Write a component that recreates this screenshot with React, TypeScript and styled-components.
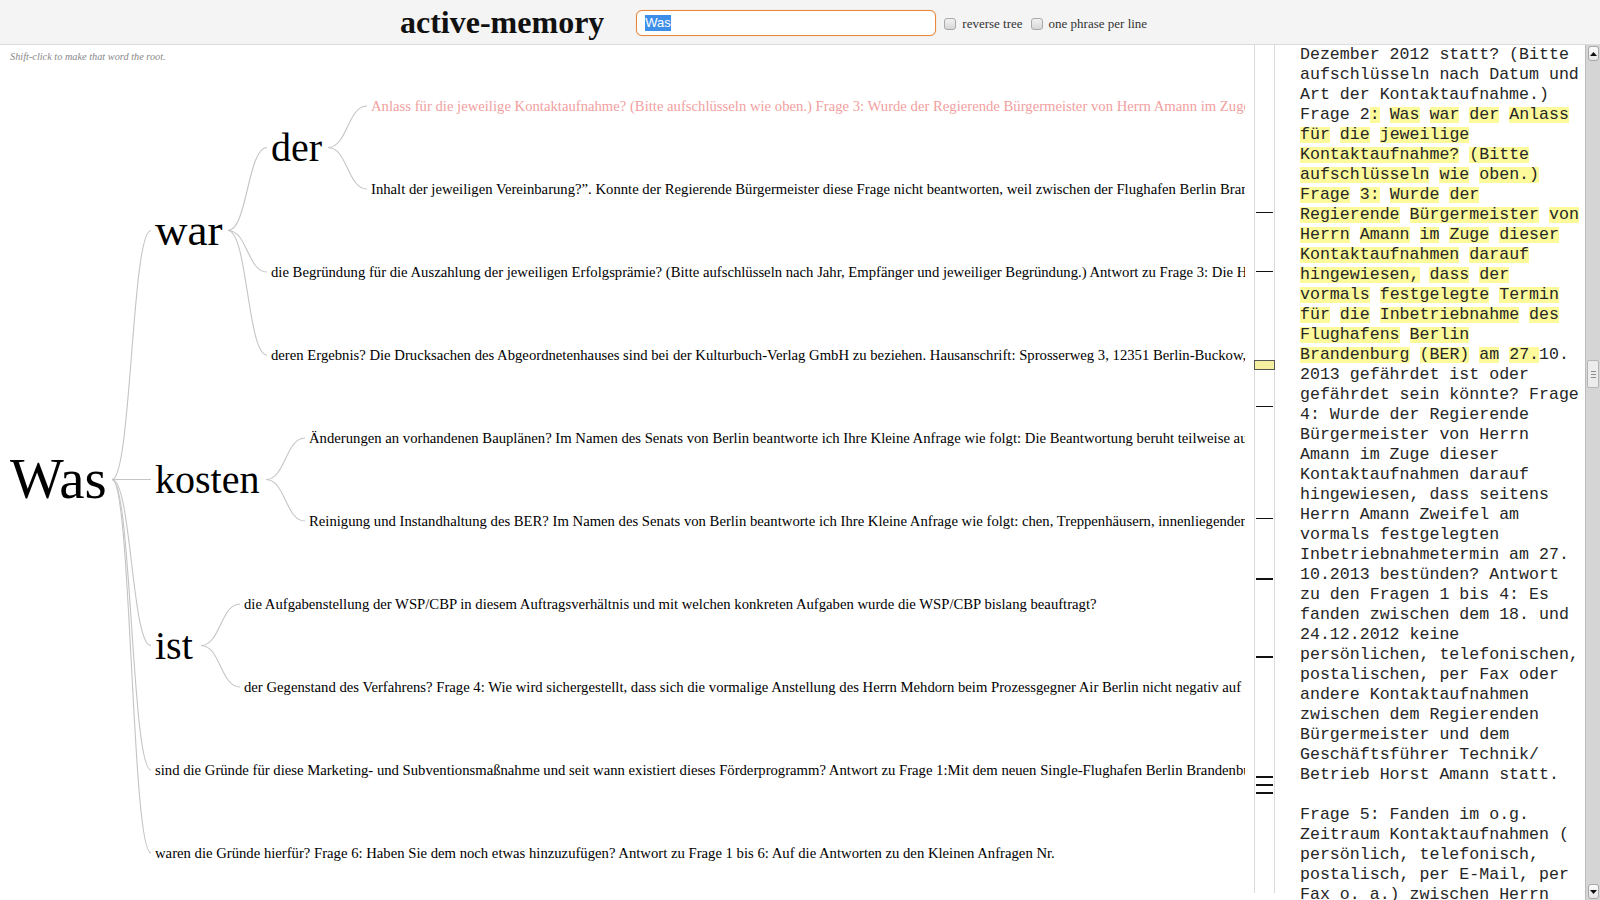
import styled, { createGlobalStyle } from 'styled-components';

const GlobalStyle = createGlobalStyle`
    html, body {
        margin: 0;
        padding: 0;
        background: #fff;
        overflow: hidden;
    }
    body {
        font-family: "Liberation Serif", serif;
    }
`;

const Page = styled.div`
    width: 1600px;
    height: 900px;
    display: flex;
    flex-direction: column;
`;

const Header = styled.header`
    height: 44px;
    flex: none;
    display: flex;
    align-items: center;
    padding-left: 400px;
    background-color: #f4f4f4;
    border-bottom: 1px solid #dcdcdc;
`;

const Title = styled.h1`
    margin: 0 32px 0 0;
    font-family: "Liberation Serif", serif;
    font-weight: 700;
    font-size: 32px;
    line-height: 1;
    color: #111;
`;

const SearchBox = styled.div`
    box-sizing: border-box;
    width: 300px;
    height: 26px;
    margin-top: 2px;
    display: flex;
    align-items: center;
    padding: 0 8px;
    background: #fff;
    border: 1px solid #e8863a;
    border-radius: 6px;
    box-shadow: 0 0 1px rgba(232, 134, 58, 0.6);
    font-family: "Liberation Sans", sans-serif;
    font-size: 13px;
`;

const Selected = styled.span`
    background: #3d8ee8;
    color: #fff;
    line-height: 16px;
`;

const Option = styled.label`
    display: flex;
    align-items: center;
    gap: 6px;
    margin: 4px 0 0 8px;
    font-family: "Liberation Serif", serif;
    font-size: 13px;
    color: #333;
`;

const Checkbox = styled.span`
    box-sizing: border-box;
    width: 12px;
    height: 12px;
    border: 1px solid #a9a9a9;
    border-radius: 3px;
    background: linear-gradient(#f2f2f2, #d6d6d6);
`;

const Main = styled.div`
    flex: 1;
    display: flex;
    min-height: 0;
`;

const TreePanel = styled.div`
    width: 1245px;
    flex: none;
    position: relative;
    overflow: hidden;
`;

const Hint = styled.div`
    padding: 6px 10px;
    font-family: "Liberation Serif", serif;
    font-style: italic;
    font-size: 10.3px;
    line-height: 12px;
    color: #8a8a8a;
`;

const TreeCanvas = styled.svg`
    position: absolute;
    left: 0;
    top: 0;
`;

const Link = styled.path`
    fill: none;
    stroke: #c4c4c4;
    stroke-width: 1.1;
`;

const NodeLabel = styled.text<{ $size: number; $hot?: boolean }>`
    font-family: "Liberation Serif", serif;
    font-size: ${(p) => p.$size}px;
    fill: ${(p) => (p.$hot ? '#f2a0a0' : '#000')};
`;

const Minimap = styled.div`
    width: 19px;
    height: 848px;
    flex: none;
    margin-left: 9px;
    position: relative;
    border-left: 1px solid #dadada;
    border-right: 1px solid #dadada;
`;

const Mark = styled.div<{ $thick?: boolean }>`
    position: absolute;
    left: 1px;
    right: 1px;
    height: ${(p) => (p.$thick ? 2 : 1)}px;
    background: #111;
`;

const ViewBox = styled.div`
    position: absolute;
    left: -1px;
    right: -1px;
    height: 8px;
    background: #f3eea0;
    border: 1px solid #555;
`;

const TextPanel = styled.div`
    flex: 1;
    overflow: hidden;
    padding-left: 25px;
    font-family: "Liberation Mono", monospace;
    font-size: 16.6px;
    color: #262626;
`;

const Line = styled.div`
    height: 20px;
    line-height: 20px;
    white-space: pre;
`;

const Hit = styled.span`
    background: linear-gradient(#fdfa9c, #fdfa9c) 0 50% / 100% 16px no-repeat;
`;

const Scrollbar = styled.div`
    width: 15px;
    flex: none;
    display: flex;
    flex-direction: column;
    background: #d5d5d5;
    border-left: 1px solid #bcbcbc;
    box-sizing: border-box;
`;

const ArrowButton = styled.div`
    height: 15px;
    flex: none;
    display: flex;
    align-items: center;
    justify-content: center;
    margin: 1px 1px 1px 2px;
    box-sizing: border-box;
    background: linear-gradient(#fbfbfb, #e6e6e6);
    border: 1px solid #a8a8a8;
    border-radius: 3px;
`;

const Track = styled.div`
    flex: 1;
    display: flex;
    flex-direction: column;
`;

const Thumb = styled.div`
    height: 26px;
    margin: 298px 1px 0 1px;
    display: flex;
    align-items: center;
    justify-content: center;
    background: #ececec;
    border: 1px solid #b5b5b5;
    border-radius: 2px;
`;

type TreeNode = {
    label: string;
    x: number;
    size: number;
    hot?: boolean;
    children?: TreeNode[];
};

const leaf = (x: number, label: string, hot = false): TreeNode => ({ label, x, size: 14.7, hot });

const tree: TreeNode = {
    label: 'Was',
    x: 10,
    size: 57,
    children: [
        {
            label: 'war',
            x: 155,
            size: 45,
            children: [
                {
                    label: 'der',
                    x: 271,
                    size: 40,
                    children: [
                        leaf(371, 'Anlass für die jeweilige Kontaktaufnahme? (Bitte aufschlüsseln wie oben.) Frage 3: Wurde der Regierende Bürgermeister von Herrn Amann im Zuge dieser Kontaktaufnahmen darauf hingewiesen', true),
                        leaf(371, 'Inhalt der jeweiligen Vereinbarung?”. Konnte der Regierende Bürgermeister diese Frage nicht beantworten, weil zwischen der Flughafen Berlin Brandenburg GmbH'),
                    ],
                },
                leaf(271, 'die Begründung für die Auszahlung der jeweiligen Erfolgsprämie? (Bitte aufschlüsseln nach Jahr, Empfänger und jeweiliger Begründung.) Antwort zu Frage 3: Die Höhe der'),
                leaf(271, 'deren Ergebnis? Die Drucksachen des Abgeordnetenhauses sind bei der Kulturbuch-Verlag GmbH zu beziehen. Hausanschrift: Sprosserweg 3, 12351 Berlin-Buckow, Postanschrift'),
            ],
        },
        {
            label: 'kosten',
            x: 155,
            size: 40,
            children: [
                leaf(309, 'Änderungen an vorhandenen Bauplänen? Im Namen des Senats von Berlin beantworte ich Ihre Kleine Anfrage wie folgt: Die Beantwortung beruht teilweise auf Angaben'),
                leaf(309, 'Reinigung und Instandhaltung des BER? Im Namen des Senats von Berlin beantworte ich Ihre Kleine Anfrage wie folgt: chen, Treppenhäusern, innenliegenden Räumen'),
            ],
        },
        {
            label: 'ist',
            x: 155,
            size: 40,
            children: [
                leaf(244, 'die Aufgabenstellung der WSP/CBP in diesem Auftragsverhältnis und mit welchen konkreten Aufgaben wurde die WSP/CBP bislang beauftragt?'),
                leaf(244, 'der Gegenstand des Verfahrens? Frage 4: Wie wird sichergestellt, dass sich die vormalige Anstellung des Herrn Mehdorn beim Prozessgegner Air Berlin nicht negativ auf das'),
            ],
        },
        leaf(155, 'sind die Gründe für diese Marketing- und Subventionsmaßnahme und seit wann existiert dieses Förderprogramm? Antwort zu Frage 1:Mit dem neuen Single-Flughafen Berlin Brandenburg'),
        leaf(155, 'waren die Gründe hierfür? Frage 6: Haben Sie dem noch etwas hinzuzufügen? Antwort zu Frage 1 bis 6: Auf die Antworten zu den Kleinen Anfragen Nr.'),
    ],
};

type Placed = { node: TreeNode; y: number; parentY?: number };

// leaves sit on a fixed grid, inner nodes at the middle of their leaf range
const LEAF_TOP = 61;
const LEAF_STEP = 83;

const layout = (node: TreeNode, counter: { i: number }, out: Placed[], parentY?: number): Placed => {
    if (!node.children) {
        const p = { node, y: LEAF_TOP + LEAF_STEP * counter.i++, parentY };
        out.push(p);
        return p;
    }
    const entry: Placed = { node, y: 0, parentY };
    out.push(entry);
    const kids = node.children.map((c) => layout(c, counter, out));
    const first = LEAF_TOP + LEAF_STEP * firstLeaf(node, out);
    const last = LEAF_TOP + LEAF_STEP * (counter.i - 1);
    entry.y = (first + last) / 2;
    kids.forEach((k) => (k.parentY = entry.y));
    return entry;
};

const firstLeaf = (node: TreeNode, out: Placed[]): number => {
    let n = node;
    while (n.children) n = n.children[0];
    const leaves = out.filter((p) => !p.node.children);
    return leaves.findIndex((p) => p.node === n);
};

const linkPath = (x: number, y0: number, y1: number) => {
    const x0 = x - 43;
    const x1 = x - 4;
    const mx = (x0 + x1) / 2;
    return `M${x0},${y0} C${mx},${y0} ${mx},${y1} ${x1},${y1}`;
};

const WordTree = () => {
    const placed: Placed[] = [];
    layout(tree, { i: 0 }, placed);
    return (
        <TreeCanvas width={1245} height={855}>
            {placed.filter((p) => p.parentY !== undefined).map((p, i) => (
                <Link key={`l${i}`} d={linkPath(p.node.x, p.parentY!, p.y)} />
            ))}
            {placed.map((p, i) => (
                <NodeLabel key={`t${i}`} x={p.node.x} y={p.y} dy="0.33em" $size={p.node.size} $hot={p.node.hot}>
                    {p.node.label}
                </NodeLabel>
            ))}
        </TreeCanvas>
    );
};

const marks = [
    { top: 167, thick: false },
    { top: 226, thick: false },
    { top: 361, thick: false },
    { top: 473, thick: false },
    { top: 533, thick: true },
    { top: 611, thick: true },
    { top: 731, thick: true },
    { top: 739, thick: true },
    { top: 747, thick: true },
];

const lines = [
    'Dezember 2012 statt? (Bitte',
    'aufschlüsseln nach Datum und',
    'Art der Kontaktaufnahme.)',
    'Frage 2{:} {Was} {war} {der} {Anlass}',
    '{für} {die} {jeweilige}',
    '{Kontaktaufnahme?} {(Bitte}',
    '{aufschlüsseln} {wie} {oben.)}',
    '{Frage} {3:} {Wurde} {der}',
    '{Regierende} {Bürgermeister} {von}',
    '{Herrn} {Amann} {im} {Zuge} {dieser}',
    '{Kontaktaufnahmen} {darauf}',
    '{hingewiesen,} {dass} {der}',
    '{vormals} {festgelegte} {Termin}',
    '{für} {die} {Inbetriebnahme} {des}',
    '{Flughafens} {Berlin}',
    '{Brandenburg} {(BER)} {am} {27.}10.',
    '2013 gefährdet ist oder',
    'gefährdet sein könnte? Frage',
    '4: Wurde der Regierende',
    'Bürgermeister von Herrn',
    'Amann im Zuge dieser',
    'Kontaktaufnahmen darauf',
    'hingewiesen, dass seitens',
    'Herrn Amann Zweifel am',
    'vormals festgelegten',
    'Inbetriebnahmetermin am 27.',
    '10.2013 bestünden? Antwort',
    'zu den Fragen 1 bis 4: Es',
    'fanden zwischen dem 18. und',
    '24.12.2012 keine',
    'persönlichen, telefonischen,',
    'postalischen, per Fax oder',
    'andere Kontaktaufnahmen',
    'zwischen dem Regierenden',
    'Bürgermeister und dem',
    'Geschäftsführer Technik/',
    'Betrieb Horst Amann statt.',
    '',
    'Frage 5: Fanden im o.g.',
    'Zeitraum Kontaktaufnahmen (',
    'persönlich, telefonisch,',
    'postalisch, per E-Mail, per',
    'Fax o. a.) zwischen Herrn',
];

const renderLine = (line: string) =>
    line.split(/(\{[^}]*\})/).filter(Boolean).map((part, i) =>
        part.startsWith('{') ? <Hit key={i}>{part.slice(1, -1)}</Hit> : <span key={i}>{part}</span>
    );

const Arrow = ({ up }: { up?: boolean }) => (
    <svg width="7" height="4" viewBox="0 0 7 4">
        <polygon points={up ? '0,4 7,4 3.5,0' : '0,0 7,0 3.5,4'} fill="#111" />
    </svg>
);

const Grip = () => (
    <svg width="5" height="7" viewBox="0 0 5 7">
        <path d="M0 0.5H5M0 3.5H5M0 6.5H5" stroke="#8c8c8c" strokeWidth="1" />
    </svg>
);

export default function App() {
    return (
        <Page>
            <GlobalStyle />
            <Header>
                <Title>active-memory</Title>
                <SearchBox>
                    <Selected>Was</Selected>
                </SearchBox>
                <Option>
                    <Checkbox />
                    reverse tree
                </Option>
                <Option>
                    <Checkbox />
                    one phrase per line
                </Option>
            </Header>
            <Main>
                <TreePanel>
                    <WordTree />
                    <Hint>Shift-click to make that word the root.</Hint>
                </TreePanel>
                <Minimap>
                    {marks.map((m, i) => (
                        <Mark key={i} $thick={m.thick} style={{ top: m.top }} />
                    ))}
                    <ViewBox style={{ top: 315 }} />
                </Minimap>
                <TextPanel>
                    {lines.map((l, i) => (
                        <Line key={i}>{renderLine(l)}</Line>
                    ))}
                </TextPanel>
                <Scrollbar>
                    <ArrowButton>
                        <Arrow up />
                    </ArrowButton>
                    <Track>
                        <Thumb>
                            <Grip />
                        </Thumb>
                    </Track>
                    <ArrowButton>
                        <Arrow />
                    </ArrowButton>
                </Scrollbar>
            </Main>
        </Page>
    );
}
